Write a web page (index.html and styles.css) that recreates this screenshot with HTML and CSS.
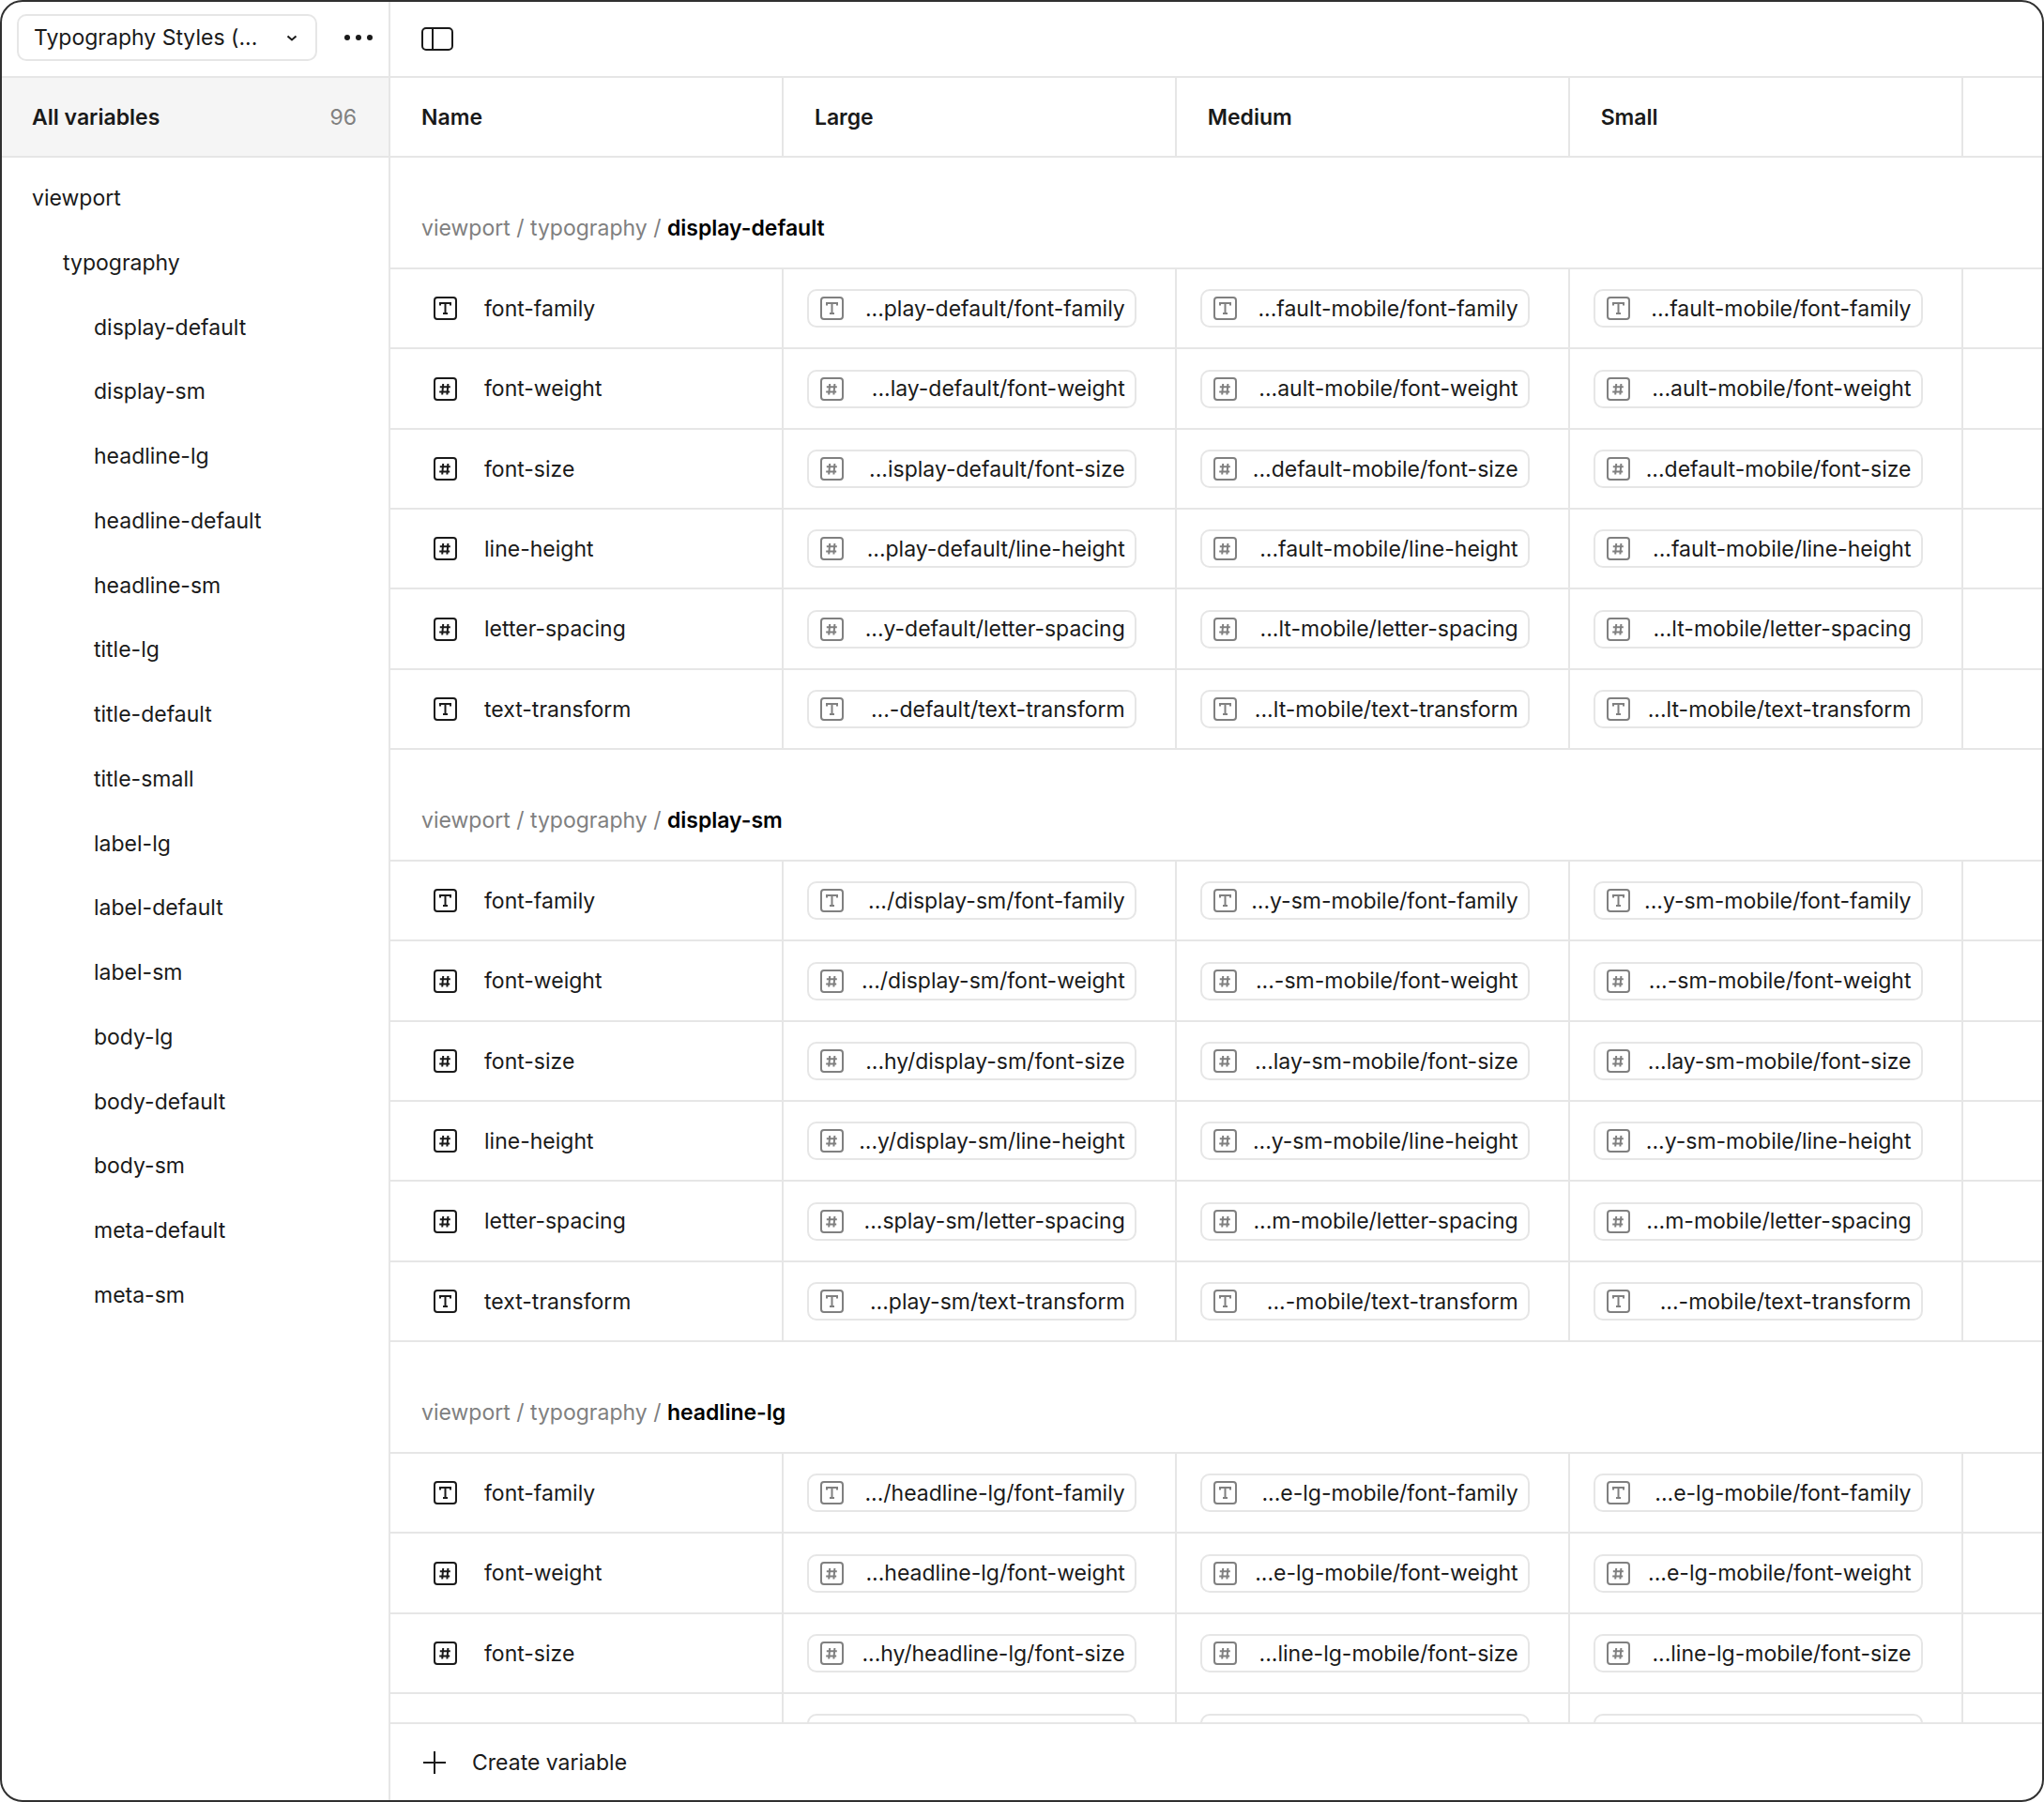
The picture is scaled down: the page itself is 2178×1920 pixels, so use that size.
FILE: index.html
```html
<!DOCTYPE html>
<html lang="en">
<head>
    <meta charset="UTF-8">
    <meta name="viewport" content="width=device-width, initial-scale=1.0">
    <title>Typography Styles - Variables</title>
    <link rel="stylesheet" href="styles.css">
</head>
<body>
    <!-- Shared icons -->
    <svg class="sprite" aria-hidden="true">
        <symbol id="icon-text" viewBox="0 0 25 25">
            <rect x="1" y="1" width="23" height="23" rx="3"/>
            <path d="M7 9.5V7h11v2.5M12.5 7v11M10 18h5"/>
        </symbol>
        <symbol id="icon-number" viewBox="0 0 25 25">
            <rect x="1" y="1" width="23" height="23" rx="3"/>
            <path d="M10.2 7l-1 11.5M15.4 7l-1 11.5M6.8 10.2h11M6.2 15.4h11"/>
        </symbol>
    </svg>

    <div class="window">
        <aside class="sidebar">
            <div class="toolbar sidebar-toolbar">
                <div class="collection">
                    <select class="collection-select" aria-label="Collection">
                        <option>Typography Styles (...</option>
                    </select>
                    <svg class="chevron" viewBox="0 0 12 8" aria-hidden="true"><path d="M1.5 1.5L6 5.5l4.500-4"/></svg>
                </div>
                <button class="icon-button" type="button" aria-label="More options">
                    <svg class="dots" viewBox="0 0 32 8" aria-hidden="true"><circle cx="4" cy="4" r="3"/><circle cx="16" cy="4" r="3"/><circle cx="28" cy="4" r="3"/></svg>
                </button>
            </div>
            <a class="all-variables" href="#all"><span>All variables</span><span class="count">96</span></a>
            <nav class="tree" aria-label="Groups">
                <a href="#viewport">viewport</a>
                <a class="level-2" href="#typography">typography</a>
                <a class="level-3" href="#display-default">display-default</a>
                <a class="level-3" href="#display-sm">display-sm</a>
                <a class="level-3" href="#headline-lg">headline-lg</a>
                <a class="level-3" href="#headline-default">headline-default</a>
                <a class="level-3" href="#headline-sm">headline-sm</a>
                <a class="level-3" href="#title-lg">title-lg</a>
                <a class="level-3" href="#title-default">title-default</a>
                <a class="level-3" href="#title-small">title-small</a>
                <a class="level-3" href="#label-lg">label-lg</a>
                <a class="level-3" href="#label-default">label-default</a>
                <a class="level-3" href="#label-sm">label-sm</a>
                <a class="level-3" href="#body-lg">body-lg</a>
                <a class="level-3" href="#body-default">body-default</a>
                <a class="level-3" href="#body-sm">body-sm</a>
                <a class="level-3" href="#meta-default">meta-default</a>
                <a class="level-3" href="#meta-sm">meta-sm</a>
            </nav>
        </aside>

        <main class="main">
            <div class="toolbar main-toolbar">
                <button class="icon-button" type="button" aria-label="Toggle sidebar">
                    <svg class="panel" viewBox="0 0 34 25" aria-hidden="true"><rect x="1" y="1" width="32" height="23" rx="4"/><path d="M12 1v23"/></svg>
                </button>
            </div>

            <div class="table-area">
                <table class="variables">
                    <colgroup>
                        <col class="mode"><col class="mode"><col class="mode"><col class="mode"><col>
                    </colgroup>
                    <thead>
                        <tr><th scope="col">Name</th><th scope="col">Large</th><th scope="col">Medium</th><th scope="col">Small</th><td></td></tr>
                    </thead>
                    <tbody id="display-default">
                        <tr><th class="group" colspan="5" scope="rowgroup">viewport / typography / <b>display-default</b></th></tr>
                        <tr>
                            <td><div class="name"><svg class="icon"><use href="#icon-text"/></svg>font-family</div></td>
                            <td><div class="pill"><svg class="icon"><use href="#icon-text"/></svg>...play-default/font-family</div></td>
                            <td><div class="pill"><svg class="icon"><use href="#icon-text"/></svg>...fault-mobile/font-family</div></td>
                            <td><div class="pill"><svg class="icon"><use href="#icon-text"/></svg>...fault-mobile/font-family</div></td>
                            <td></td>
                        </tr>
                        <tr>
                            <td><div class="name"><svg class="icon"><use href="#icon-number"/></svg>font-weight</div></td>
                            <td><div class="pill"><svg class="icon"><use href="#icon-number"/></svg>...lay-default/font-weight</div></td>
                            <td><div class="pill"><svg class="icon"><use href="#icon-number"/></svg>...ault-mobile/font-weight</div></td>
                            <td><div class="pill"><svg class="icon"><use href="#icon-number"/></svg>...ault-mobile/font-weight</div></td>
                            <td></td>
                        </tr>
                        <tr>
                            <td><div class="name"><svg class="icon"><use href="#icon-number"/></svg>font-size</div></td>
                            <td><div class="pill"><svg class="icon"><use href="#icon-number"/></svg>...isplay-default/font-size</div></td>
                            <td><div class="pill"><svg class="icon"><use href="#icon-number"/></svg>...default-mobile/font-size</div></td>
                            <td><div class="pill"><svg class="icon"><use href="#icon-number"/></svg>...default-mobile/font-size</div></td>
                            <td></td>
                        </tr>
                        <tr>
                            <td><div class="name"><svg class="icon"><use href="#icon-number"/></svg>line-height</div></td>
                            <td><div class="pill"><svg class="icon"><use href="#icon-number"/></svg>...play-default/line-height</div></td>
                            <td><div class="pill"><svg class="icon"><use href="#icon-number"/></svg>...fault-mobile/line-height</div></td>
                            <td><div class="pill"><svg class="icon"><use href="#icon-number"/></svg>...fault-mobile/line-height</div></td>
                            <td></td>
                        </tr>
                        <tr>
                            <td><div class="name"><svg class="icon"><use href="#icon-number"/></svg>letter-spacing</div></td>
                            <td><div class="pill"><svg class="icon"><use href="#icon-number"/></svg>...y-default/letter-spacing</div></td>
                            <td><div class="pill"><svg class="icon"><use href="#icon-number"/></svg>...lt-mobile/letter-spacing</div></td>
                            <td><div class="pill"><svg class="icon"><use href="#icon-number"/></svg>...lt-mobile/letter-spacing</div></td>
                            <td></td>
                        </tr>
                        <tr>
                            <td><div class="name"><svg class="icon"><use href="#icon-text"/></svg>text-transform</div></td>
                            <td><div class="pill"><svg class="icon"><use href="#icon-text"/></svg>...-default/text-transform</div></td>
                            <td><div class="pill"><svg class="icon"><use href="#icon-text"/></svg>...lt-mobile/text-transform</div></td>
                            <td><div class="pill"><svg class="icon"><use href="#icon-text"/></svg>...lt-mobile/text-transform</div></td>
                            <td></td>
                        </tr>
                    </tbody>
                    <tbody id="display-sm">
                        <tr><th class="group" colspan="5" scope="rowgroup">viewport / typography / <b>display-sm</b></th></tr>
                        <tr>
                            <td><div class="name"><svg class="icon"><use href="#icon-text"/></svg>font-family</div></td>
                            <td><div class="pill"><svg class="icon"><use href="#icon-text"/></svg>.../display-sm/font-family</div></td>
                            <td><div class="pill"><svg class="icon"><use href="#icon-text"/></svg>...y-sm-mobile/font-family</div></td>
                            <td><div class="pill"><svg class="icon"><use href="#icon-text"/></svg>...y-sm-mobile/font-family</div></td>
                            <td></td>
                        </tr>
                        <tr>
                            <td><div class="name"><svg class="icon"><use href="#icon-number"/></svg>font-weight</div></td>
                            <td><div class="pill"><svg class="icon"><use href="#icon-number"/></svg>.../display-sm/font-weight</div></td>
                            <td><div class="pill"><svg class="icon"><use href="#icon-number"/></svg>...-sm-mobile/font-weight</div></td>
                            <td><div class="pill"><svg class="icon"><use href="#icon-number"/></svg>...-sm-mobile/font-weight</div></td>
                            <td></td>
                        </tr>
                        <tr>
                            <td><div class="name"><svg class="icon"><use href="#icon-number"/></svg>font-size</div></td>
                            <td><div class="pill"><svg class="icon"><use href="#icon-number"/></svg>...hy/display-sm/font-size</div></td>
                            <td><div class="pill"><svg class="icon"><use href="#icon-number"/></svg>...lay-sm-mobile/font-size</div></td>
                            <td><div class="pill"><svg class="icon"><use href="#icon-number"/></svg>...lay-sm-mobile/font-size</div></td>
                            <td></td>
                        </tr>
                        <tr>
                            <td><div class="name"><svg class="icon"><use href="#icon-number"/></svg>line-height</div></td>
                            <td><div class="pill"><svg class="icon"><use href="#icon-number"/></svg>...y/display-sm/line-height</div></td>
                            <td><div class="pill"><svg class="icon"><use href="#icon-number"/></svg>...y-sm-mobile/line-height</div></td>
                            <td><div class="pill"><svg class="icon"><use href="#icon-number"/></svg>...y-sm-mobile/line-height</div></td>
                            <td></td>
                        </tr>
                        <tr>
                            <td><div class="name"><svg class="icon"><use href="#icon-number"/></svg>letter-spacing</div></td>
                            <td><div class="pill"><svg class="icon"><use href="#icon-number"/></svg>...splay-sm/letter-spacing</div></td>
                            <td><div class="pill"><svg class="icon"><use href="#icon-number"/></svg>...m-mobile/letter-spacing</div></td>
                            <td><div class="pill"><svg class="icon"><use href="#icon-number"/></svg>...m-mobile/letter-spacing</div></td>
                            <td></td>
                        </tr>
                        <tr>
                            <td><div class="name"><svg class="icon"><use href="#icon-text"/></svg>text-transform</div></td>
                            <td><div class="pill"><svg class="icon"><use href="#icon-text"/></svg>...play-sm/text-transform</div></td>
                            <td><div class="pill"><svg class="icon"><use href="#icon-text"/></svg>...-mobile/text-transform</div></td>
                            <td><div class="pill"><svg class="icon"><use href="#icon-text"/></svg>...-mobile/text-transform</div></td>
                            <td></td>
                        </tr>
                    </tbody>
                    <tbody id="headline-lg">
                        <tr><th class="group" colspan="5" scope="rowgroup">viewport / typography / <b>headline-lg</b></th></tr>
                        <tr>
                            <td><div class="name"><svg class="icon"><use href="#icon-text"/></svg>font-family</div></td>
                            <td><div class="pill"><svg class="icon"><use href="#icon-text"/></svg>.../headline-lg/font-family</div></td>
                            <td><div class="pill"><svg class="icon"><use href="#icon-text"/></svg>...e-lg-mobile/font-family</div></td>
                            <td><div class="pill"><svg class="icon"><use href="#icon-text"/></svg>...e-lg-mobile/font-family</div></td>
                            <td></td>
                        </tr>
                        <tr>
                            <td><div class="name"><svg class="icon"><use href="#icon-number"/></svg>font-weight</div></td>
                            <td><div class="pill"><svg class="icon"><use href="#icon-number"/></svg>...headline-lg/font-weight</div></td>
                            <td><div class="pill"><svg class="icon"><use href="#icon-number"/></svg>...e-lg-mobile/font-weight</div></td>
                            <td><div class="pill"><svg class="icon"><use href="#icon-number"/></svg>...e-lg-mobile/font-weight</div></td>
                            <td></td>
                        </tr>
                        <tr>
                            <td><div class="name"><svg class="icon"><use href="#icon-number"/></svg>font-size</div></td>
                            <td><div class="pill"><svg class="icon"><use href="#icon-number"/></svg>...hy/headline-lg/font-size</div></td>
                            <td><div class="pill"><svg class="icon"><use href="#icon-number"/></svg>...line-lg-mobile/font-size</div></td>
                            <td><div class="pill"><svg class="icon"><use href="#icon-number"/></svg>...line-lg-mobile/font-size</div></td>
                            <td></td>
                        </tr>
                        <!-- cut off by the footer -->
                        <tr>
                            <td></td>
                            <td><div class="pill"></div></td>
                            <td><div class="pill"></div></td>
                            <td><div class="pill"></div></td>
                            <td></td>
                        </tr>
                    </tbody>
                </table>
            </div>

            <footer class="footer">
                <button class="create-button" type="button">
                    <svg class="plus" viewBox="0 0 24 24" aria-hidden="true"><path d="M12 0v24M0 12h24"/></svg>
                    Create variable
                </button>
            </footer>
        </main>
    </div>
</body>
</html>
```
FILE: styles.css
```css
* {
    box-sizing: border-box;
}
body {
    margin: 0;
    background: white;
    color: #1a1a1a;
    font-family: Inter, sans-serif;
    font-size: 23px;
    line-height: 32px;
}
a {
    color: inherit;
    text-decoration: none;
}
button, select {
    font: inherit;
    color: inherit;
    background: none;
    border: none;
    padding: 0;
    cursor: pointer;
}
svg {
    display: block;
    flex: none;
    fill: none;
    stroke: currentColor;
    stroke-width: 2;
}
.sprite {
    position: absolute;
    width: 0;
    height: 0;
}
.window {
    display: flex;
    height: 100vh;
    border: 2px solid #303030;
    border-radius: 24px;
    overflow: hidden;
}

/* Sidebar */
.sidebar {
    flex: none;
    width: 414px;
    border-right: 2px solid #e6e6e6;
}
.toolbar {
    display: flex;
    align-items: center;
    height: 81px;
    border-bottom: 2px solid #e6e6e6;
}
.sidebar-toolbar {
    justify-content: space-between;
    padding: 0 16px 3px;
}
.collection {
    position: relative;
    width: 320px;
}
.collection-select {
    display: block;
    appearance: none;
    width: 100%;
    height: 50px;
    padding: 0 48px 0 16px;
    border: 2px solid #e6e6e6;
    border-radius: 10px;
}
.chevron {
    position: absolute;
    right: 21px;
    top: 22px;
    width: 12px;
    height: 8px;
    pointer-events: none;
}
.dots {
    width: 32px;
    height: 8px;
    fill: currentColor;
    stroke: none;
}
.all-variables {
    display: flex;
    align-items: center;
    justify-content: space-between;
    height: 85px;
    padding: 0 34px 0 32px;
    background: #f5f5f5;
    border-bottom: 2px solid #e6e6e6;
    font-weight: 600;
}
.count {
    color: #808080;
    font-weight: 400;
}
.tree {
    padding-top: 8px;
}
.tree a {
    display: flex;
    align-items: center;
    height: 69px;
    padding-left: 32px;
}
.tree a:nth-child(4n) {
    height: 68px;
}
.tree .level-2 {
    padding-left: 65px;
}
.tree .level-3 {
    padding-left: 98px;
}

/* Main */
.main {
    flex: 1;
    min-width: 0;
    display: flex;
    flex-direction: column;
}
.main-toolbar {
    flex: none;
    padding: 0 33px;
}
.panel {
    width: 34px;
    height: 25px;
}
.table-area {
    flex: 1;
    min-height: 0;
    overflow: hidden;
}
.variables {
    width: 100%;
    table-layout: fixed;
    border-collapse: separate;
    border-spacing: 0;
}
.mode {
    width: 23.8%;
}
th, td {
    height: 85px;
    padding: 0;
    border-bottom: 2px solid #e6e6e6;
    border-right: 2px solid #e6e6e6;
    text-align: left;
    white-space: nowrap;
}
th {
    padding-left: 33px;
    font-weight: 600;
}
tr > :last-child {
    border-right: none;
}
tbody tr:nth-child(3n) td {
    height: 86px;
}
th.group {
    height: 119px;
    padding-bottom: 26px;
    vertical-align: bottom;
    color: #808080;
    font-weight: 400;
}
.group b {
    color: black;
    font-weight: 600;
}
.name {
    display: flex;
    align-items: center;
    gap: 29px;
    padding-left: 46px;
}
.icon {
    width: 25px;
    height: 25px;
}
.pill {
    display: flex;
    align-items: center;
    justify-content: space-between;
    height: 41px;
    margin: 0 41px 0 25px;
    padding: 0 10px 0 12px;
    border: 2px solid #e6e6e6;
    border-radius: 10px;
}
.pill .icon {
    color: #808080;
}

/* Footer */
.footer {
    flex: none;
    display: flex;
    align-items: center;
    height: 83px;
    padding: 0 35px;
    border-top: 2px solid #e6e6e6;
}
.create-button {
    display: flex;
    align-items: center;
    gap: 28px;
}
.plus {
    width: 24px;
    height: 24px;
}
```
